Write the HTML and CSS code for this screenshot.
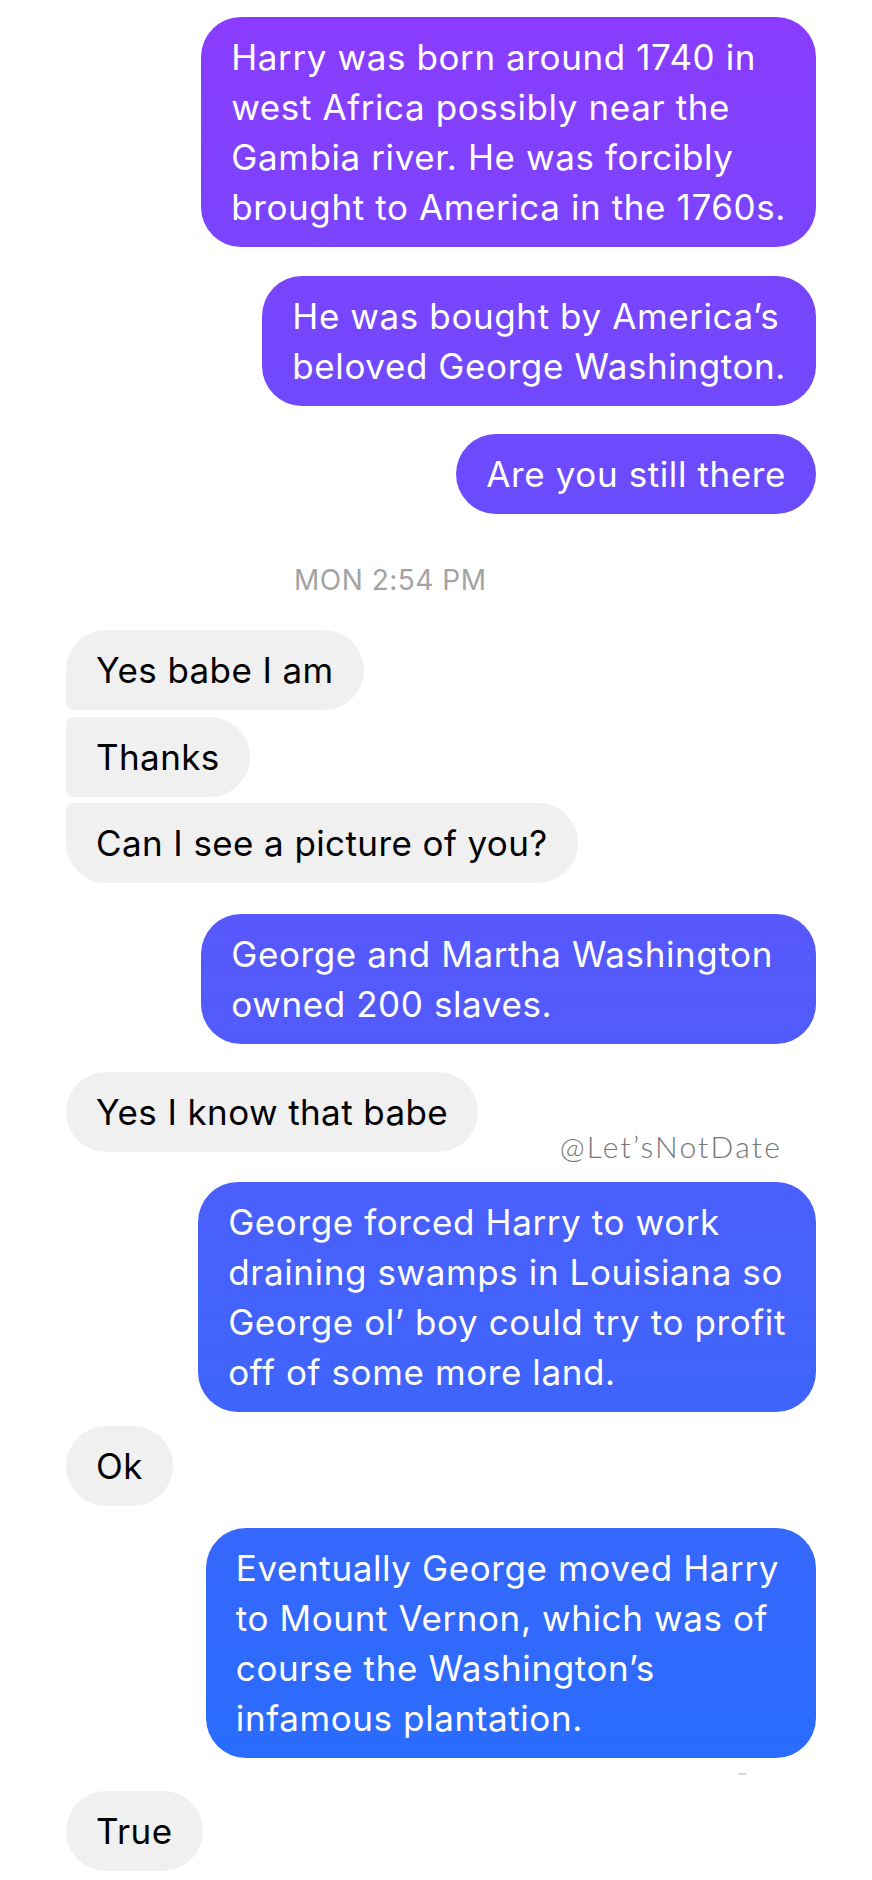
FILE: index.html
```html
<!DOCTYPE html>
<html lang="en">
<head>
<meta charset="utf-8">
<title>Chat</title>
<link rel="stylesheet" href="styles.css">
</head>
<body>
<main class="thread">
  <div class="msg sent first-msg">Harry was born around 1740 in<br>west Africa possibly near the<br>Gambia river. He was forcibly<br>brought to America in the 1760s.</div>
  <div class="msg sent gap-29">He was bought by America’s<br>beloved George Washington.</div>
  <div class="msg sent gap-28">Are you still there</div>

  <div class="stamp">MON 2:54 PM</div>

  <div class="msg recv first">Yes babe I am</div>
  <div class="msg recv mid">Thanks</div>
  <div class="msg recv last">Can I see a picture of you?</div>

  <div class="msg sent gap-31 pad-wide">George and Martha Washington<br>owned 200 slaves.</div>

  <div class="msg recv gap-28">Yes I know that babe</div>
  <div class="watermark">@Let’sNotDate</div>

  <div class="msg sent gap-19">George forced Harry to work<br>draining swamps in Louisiana so<br>George ol’ boy could try to profit<br>off of some more land.</div>

  <div class="msg recv gap-14">Ok</div>

  <div class="msg sent gap-22 pad-mid">Eventually George moved Harry<br>to Mount Vernon, which was of<br>course the Washington’s<br>infamous plantation.</div>
  <div class="dash"></div>

  <div class="msg recv gap-16">True</div>
</main>
</body>
</html>
```

FILE: styles.css
```css
html, body {
  margin: 0;
  padding: 0;
  background: #ffffff;
}

.thread {
  display: flex;
  flex-direction: column;
  padding: 0 56px 0 66px;
  font-family: Inter, Roboto, "Liberation Sans", sans-serif;
}

.msg {
  font-size: 35px;
  line-height: 50px;
  letter-spacing: 0.6px;
  padding: 15px 30px;
  border-radius: 40px;
  width: fit-content;
  white-space: nowrap;
}

.sent {
  align-self: flex-end;
  color: #ffffff;
  background: linear-gradient(180deg, #8b3cfe 0px, #6a4cfd 500px, #4a60fc 1200px, #2a6cfd 1750px, #2670fe 1880px);
  background-attachment: fixed;
}

.sent.pad-wide { padding-right: 43px; }
.sent.pad-mid { padding-right: 37px; }

.recv {
  align-self: flex-start;
  color: #000000;
  background: #f0f0f0;
  letter-spacing: 0.4px;
}

.recv.first { border-bottom-left-radius: 8px; }
.recv.mid { border-radius: 8px 40px 40px 8px; margin-top: 6.5px; }
.recv.last { border-top-left-radius: 8px; margin-top: 6.5px; }

.first-msg { margin-top: 17px; }
.gap-14 { margin-top: 14px; }
.gap-16 { margin-top: 16px; }
.gap-19 { margin-top: 19px; }
.gap-22 { margin-top: 22px; }
.gap-28 { margin-top: 28px; }
.gap-29 { margin-top: 29px; }
.gap-31 { margin-top: 31px; }

.stamp {
  align-self: flex-start;
  margin: 50px 0 34px 228px;
  font-size: 28px;
  line-height: 32px;
  color: #a3a3a3;
  letter-spacing: 0.5px;
}

.watermark {
  align-self: flex-end;
  margin: -23px 34px 0 0;
  font-family: Lato, sans-serif;
  font-weight: 300;
  font-size: 30px;
  line-height: 34px;
  letter-spacing: 2.2px;
  color: #777777;
}

.dash {
  align-self: flex-end;
  width: 8px;
  height: 2px;
  background: #d8d8d8;
  margin: 15px 70px 0 0;
}
```
